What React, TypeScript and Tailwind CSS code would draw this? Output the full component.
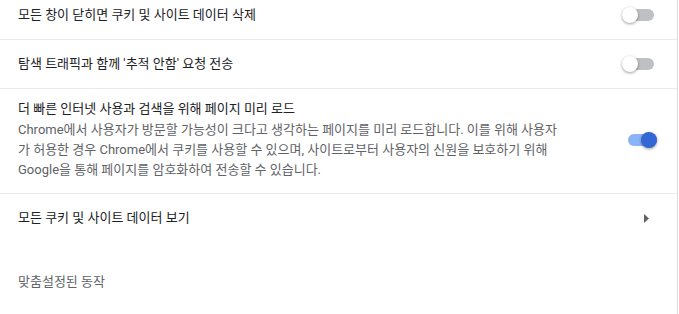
import React from 'react';

const font = { fontFamily: 'Roboto, "Noto Sans CJK KR", "Noto Sans", sans-serif' };

const Toggle = ({ on = false }: { on?: boolean }) => (
  <div className={`relative w-[32px] h-[16px] shrink-0 ${on ? 'mr-[20px]' : 'mr-[23px]'}`}>
    <div
      className={`absolute top-[2px] left-[3px] right-0 h-[12px] rounded-full ${on ? 'bg-[#8ab4f8]' : 'bg-[#bdc1c6]'}`}
    />
    <div
      className={`absolute top-0 w-[16px] h-[16px] rounded-full shadow-[0_1px_3px_rgba(0,0,0,0.4)] ${on ? 'right-0 bg-[#3367d6]' : 'left-0 bg-white'}`}
    />
  </div>
);

const Row = ({ label, on, first = false }: { label: string; on?: boolean; first?: boolean }) => (
  <div
    className={`flex items-center justify-between pl-[18px] ${first ? 'h-[39px] pb-[10px]' : 'h-[49px] border-t border-[#e8eaed]'}`}
  >
    <span className="text-[13px] leading-5 text-[#202124]">{label}</span>
    <Toggle on={on} />
  </div>
);

export default function App() {
  return (
    <div className="min-h-screen w-[678px] bg-white border-r border-[#dadce0]" style={font}>
      <Row first label="모든 창이 닫히면 쿠키 및 사이트 데이터 삭제" />
      <Row label="탐색 트래픽과 함께 '추적 안함' 요청 전송" />

      <div className="flex items-center justify-between pl-[18px] border-t border-[#e8eaed] pt-[10px] pb-[13px]">
        <div className="text-[13px] leading-5 whitespace-nowrap">
          <div className="text-[#202124] mb-px">더 빠른 인터넷 사용과 검색을 위해 페이지 미리 로드</div>
          <div className="text-[#5f6368]">
            Chrome에서 사용자가 방문할 가능성이 크다고 생각하는 페이지를 미리 로드합니다. 이를 위해 사용자
            <br />
            가 허용한 경우 Chrome에서 쿠키를 사용할 수 있으며, 사이트로부터 사용자의 신원을 보호하기 위해
            <br />
            Google을 통해 페이지를 암호화하여 전송할 수 있습니다.
          </div>
        </div>
        <Toggle on />
      </div>

      <div className="flex items-center justify-between pl-[18px] h-[49px] border-t border-[#e8eaed]">
        <span className="text-[13px] leading-5 text-[#202124]">모든 쿠키 및 사이트 데이터 보기</span>
        <svg width="5" height="9" viewBox="0 0 5 9" className="mr-[28px]">
          <path d="M0 0 L5 4.5 L0 9 Z" fill="#5f6368" />
        </svg>
      </div>

      <div className="pl-[18px] pt-[30px] text-[13px] leading-5 text-[#5f6368]">맞춤설정된 동작</div>
    </div>
  );
}
